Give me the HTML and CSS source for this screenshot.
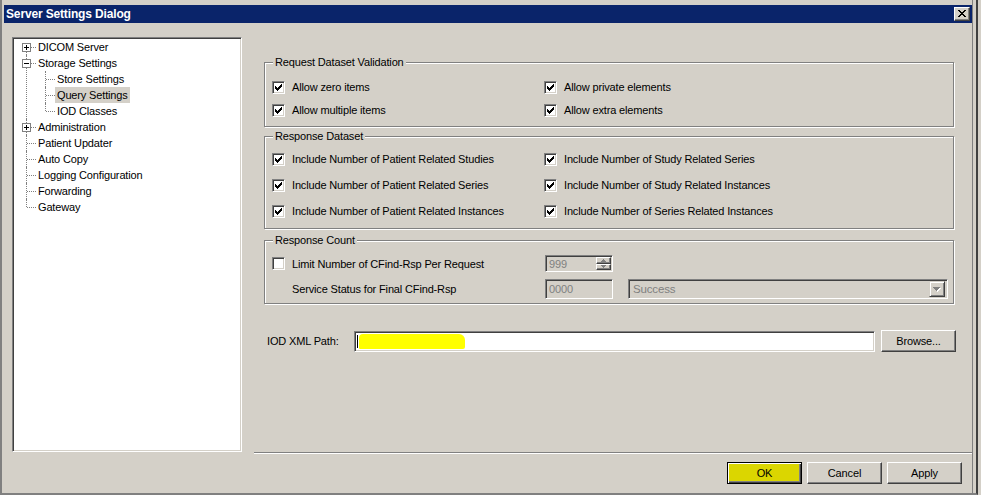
FILE: index.html
```html
<!DOCTYPE html>
<html>
<head>
<meta charset="utf-8">
<title>Server Settings Dialog</title>
<link rel="stylesheet" href="styles.css">
</head>
<body>
<div class="window">
  <div class="titlebar">
    <span class="title">Server Settings Dialog</span>
    <span class="close"><svg width="8" height="7" viewBox="0 0 8 7"><path d="M0 0h2v1H0zM6 0h2v1H6zM1 1h2v1H1zM5 1h2v1H5zM2 2h4v1H2zM3 3h2v1H3zM2 4h4v1H2zM1 5h2v1H1zM5 5h2v1H5zM0 6h2v1H0zM6 6h2v1H6z" fill="#000"/></svg></span>
  </div>
  <div class="main">
    <div class="tree">
      <ul class="roots">
        <li class="top"><span class="exp"><svg width="9" height="9"><rect x=".5" y=".5" width="8" height="8" fill="#fff" stroke="#808080"/><path d="M2 4h5v1H2zM4 2h1v5H4z" fill="#000"/></svg></span><span class="lbl">DICOM Server</span></li>
        <li class="top"><span class="exp"><svg width="9" height="9"><rect x=".5" y=".5" width="8" height="8" fill="#fff" stroke="#808080"/><path d="M2 4h5v1H2z" fill="#000"/></svg></span><span class="lbl">Storage Settings</span>
          <ul class="kids">
            <li class="child"><span class="lbl">Store Settings</span></li>
            <li class="child"><span class="lbl sel">Query Settings</span></li>
            <li class="child"><span class="lbl">IOD Classes</span></li>
          </ul>
        </li>
        <li class="top"><span class="exp"><svg width="9" height="9"><rect x=".5" y=".5" width="8" height="8" fill="#fff" stroke="#808080"/><path d="M2 4h5v1H2zM4 2h1v5H4z" fill="#000"/></svg></span><span class="lbl">Administration</span></li>
        <li class="top"><span class="lbl">Patient Updater</span></li>
        <li class="top"><span class="lbl">Auto Copy</span></li>
        <li class="top"><span class="lbl">Logging Configuration</span></li>
        <li class="top"><span class="lbl">Forwarding</span></li>
        <li class="top"><span class="lbl">Gateway</span></li>
      </ul>
    </div>
    <div class="panel">
      <fieldset class="group">
        <legend>Request Dataset Validation</legend>
        <div class="rows rows-req">
          <label class="check"><span class="box"><svg width="7" height="7"><path d="M0 2h1v3H0zM1 3h1v3H1zM2 4h1v3H2zM3 3h1v3H3zM4 2h1v3H4zM5 1h1v3H5zM6 0h1v3H6z" fill="#000"/></svg></span>Allow zero items</label>
          <label class="check"><span class="box"><svg width="7" height="7"><path d="M0 2h1v3H0zM1 3h1v3H1zM2 4h1v3H2zM3 3h1v3H3zM4 2h1v3H4zM5 1h1v3H5zM6 0h1v3H6z" fill="#000"/></svg></span>Allow private elements</label>
          <label class="check"><span class="box"><svg width="7" height="7"><path d="M0 2h1v3H0zM1 3h1v3H1zM2 4h1v3H2zM3 3h1v3H3zM4 2h1v3H4zM5 1h1v3H5zM6 0h1v3H6z" fill="#000"/></svg></span>Allow multiple items</label>
          <label class="check"><span class="box"><svg width="7" height="7"><path d="M0 2h1v3H0zM1 3h1v3H1zM2 4h1v3H2zM3 3h1v3H3zM4 2h1v3H4zM5 1h1v3H5zM6 0h1v3H6z" fill="#000"/></svg></span>Allow extra elements</label>
        </div>
      </fieldset>
      <fieldset class="group g2">
        <legend>Response Dataset</legend>
        <div class="rows rows-resp">
          <label class="check"><span class="box"><svg width="7" height="7"><path d="M0 2h1v3H0zM1 3h1v3H1zM2 4h1v3H2zM3 3h1v3H3zM4 2h1v3H4zM5 1h1v3H5zM6 0h1v3H6z" fill="#000"/></svg></span>Include Number of Patient Related Studies</label>
          <label class="check"><span class="box"><svg width="7" height="7"><path d="M0 2h1v3H0zM1 3h1v3H1zM2 4h1v3H2zM3 3h1v3H3zM4 2h1v3H4zM5 1h1v3H5zM6 0h1v3H6z" fill="#000"/></svg></span>Include Number of Study Related Series</label>
          <label class="check"><span class="box"><svg width="7" height="7"><path d="M0 2h1v3H0zM1 3h1v3H1zM2 4h1v3H2zM3 3h1v3H3zM4 2h1v3H4zM5 1h1v3H5zM6 0h1v3H6z" fill="#000"/></svg></span>Include Number of Patient Related Series</label>
          <label class="check"><span class="box"><svg width="7" height="7"><path d="M0 2h1v3H0zM1 3h1v3H1zM2 4h1v3H2zM3 3h1v3H3zM4 2h1v3H4zM5 1h1v3H5zM6 0h1v3H6z" fill="#000"/></svg></span>Include Number of Study Related Instances</label>
          <label class="check"><span class="box"><svg width="7" height="7"><path d="M0 2h1v3H0zM1 3h1v3H1zM2 4h1v3H2zM3 3h1v3H3zM4 2h1v3H4zM5 1h1v3H5zM6 0h1v3H6z" fill="#000"/></svg></span>Include Number of Patient Related Instances</label>
          <label class="check"><span class="box"><svg width="7" height="7"><path d="M0 2h1v3H0zM1 3h1v3H1zM2 4h1v3H2zM3 3h1v3H3zM4 2h1v3H4zM5 1h1v3H5zM6 0h1v3H6z" fill="#000"/></svg></span>Include Number of Series Related Instances</label>
        </div>
      </fieldset>
      <fieldset class="group g3">
        <legend>Response Count</legend>
        <div class="rows rows-count">
          <label class="check"><span class="box"></span>Limit Number of CFind-Rsp Per Request</label>
          <div class="spin">
            <span class="spin-val">999</span>
            <span class="spin-btns">
              <span class="sbtn"><svg width="5" height="3"><path d="M2 0h1v1H2zM1 1h3v1H1zM0 2h5v1H0z" fill="#808080"/></svg></span>
              <span class="sbtn"><svg width="5" height="3"><path d="M0 0h5v1H0zM1 1h3v1H1zM2 2h1v1H2z" fill="#808080"/></svg></span>
            </span>
          </div>
          <span class="empty"></span>
          <span class="plain">Service Status for Final CFind-Rsp</span>
          <div class="field dis">0000</div>
          <div class="combo">
            <span class="combo-val">Success</span>
            <span class="drop"><svg width="8" height="5"><path d="M1 1h7v1H1zM2 2h5v1H2zM3 3h3v1H3zM4 4h1v1H4z" fill="#fff"/><path d="M0 0h7v1H0zM1 1h5v1H1zM2 2h3v1H2zM3 3h1v1H3z" fill="#808080"/></svg></span>
          </div>
        </div>
      </fieldset>
      <div class="pathrow">
        <span class="pathlbl">IOD XML Path:</span>
        <div class="field pathfield"><span class="caret"></span><span class="redact"></span></div>
        <button class="btn">Browse...</button>
      </div>
    </div>
  </div>
  <div class="footer">
    <button class="btn default">OK</button>
    <button class="btn">Cancel</button>
    <button class="btn">Apply</button>
  </div>
</div>
</body>
</html>
```
FILE: styles.css
```css
html, body {
  margin: 0;
  padding: 0;
  background: #d4d0c8;
}
body {
  font-family: "Liberation Sans", Arial, sans-serif;
  font-size: 11px;
  letter-spacing: -0.15px;
  color: #000;
}
.window {
  width: 978px;
  height: 495px;
  box-sizing: border-box;
  padding: 5px 4px 0 2px;
  border-left: 2px solid #808080;
  border-right: 2px solid #404040;
  border-bottom: 2px solid #808080;
  box-shadow: inset -3px 0 0 #d4d0c8, inset -4px 0 0 #808080;
  display: flex;
  flex-direction: column;
}
.titlebar {
  height: 18px;
  background: #0a246a;
  display: flex;
  align-items: center;
  justify-content: space-between;
  padding: 0 2px 0 2px;
  flex: none;
}
.title {
  color: #fff;
  font-weight: bold;
  font-size: 12px;
  letter-spacing: -0.15px;
}
.close {
  width: 16px;
  height: 14px;
  box-sizing: border-box;
  background: #d4d0c8;
  border: 1px solid;
  border-color: #fff #404040 #404040 #fff;
  box-shadow: inset -1px -1px 0 #808080;
  display: flex;
  align-items: center;
  justify-content: center;
  padding: 0 1px 1px 0;
}
.close svg { display: block; }

.main {
  height: 430px;
  display: flex;
  flex: none;
}
.tree {
  flex: none;
  width: 230px;
  margin: 14px 0 1px 8px;
  box-sizing: border-box;
  background: #fff;
  border: 1px solid;
  border-color: #808080 #fff #fff #808080;
  box-shadow: inset 1px 1px 0 #404040, inset -1px -1px 0 #d4d0c8;
  padding: 1px;
}
.tree ul {
  list-style: none;
  margin: 0;
  padding: 0;
}
.tree li {
  position: relative;
  line-height: 16px;
}
.tree li.top { padding-left: 24px; }
.tree .kids { margin-left: -24px; }
.tree li.child { padding-left: 43px; }
.tree .lbl {
  display: inline-block;
  height: 16px;
  padding: 0 2px;
  margin-left: -2px;
  position: relative;
  z-index: 1;
}
.tree .lbl.sel { background: #d4d0c8; }
.tree li.top::before {
  content: "";
  position: absolute;
  left: 12px;
  top: 0;
  bottom: 0;
  border-left: 1px dotted #808080;
}
.tree li.top:first-child::before { top: 8px; }
.tree li.top:last-child::before { bottom: auto; height: 8px; }
.tree li.top::after {
  content: "";
  position: absolute;
  left: 13px;
  top: 8px;
  width: 9px;
  border-top: 1px dotted #808080;
}
.tree li.child::before {
  content: "";
  position: absolute;
  left: 31px;
  top: 0;
  bottom: 0;
  border-left: 1px dotted #808080;
}
.tree li.child:last-child::before { bottom: auto; height: 8px; }
.tree li.child::after {
  content: "";
  position: absolute;
  left: 32px;
  top: 8px;
  width: 9px;
  border-top: 1px dotted #808080;
}
.tree .exp {
  position: absolute;
  left: 8px;
  top: 4px;
  width: 9px;
  height: 9px;
  z-index: 2;
}
.tree .exp svg { display: block; }

.panel {
  flex: 1;
  min-width: 0;
  margin-left: 12px;
  padding: 32px 18px 0 10px;
  border-bottom: 1px solid #808080;
  box-shadow: 0 1px 0 #fff;
}
.group {
  width: 690px;
  box-sizing: border-box;
  margin: 0;
  padding: 0 5px 0 7px;
  min-width: 0;
  border: 1px solid #808080;
  box-shadow: inset 1px 1px 0 #fff, 1px 1px 0 #fff;
}
.group legend {
  margin-left: 1px;
  padding: 0 2px;
  line-height: 14px;
  height: 14px;
  background: #d4d0c8;
}
.g2 { margin-top: 2px; }
.g3 { margin-top: 4px; }
.rows {
  display: grid;
  grid-template-columns: 272px 1fr;
}
.rows-req {
  padding: 10px 0 8px;
  grid-auto-rows: 16px;
  row-gap: 7px;
}
.rows-resp {
  padding: 8px 0 9px;
  grid-auto-rows: 16px;
  row-gap: 10px;
}
.rows-count {
  padding: 8px 0 4px;
  grid-template-columns: 258px 68px 1fr;
  grid-template-rows: 17px 20px;
  column-gap: 15px;
  row-gap: 7px;
  align-items: center;
}
.check {
  display: flex;
  align-items: center;
  gap: 7px;
  height: 16px;
  white-space: nowrap;
}
.box {
  width: 13px;
  height: 13px;
  box-sizing: border-box;
  flex: none;
  background: #fff;
  border: 1px solid;
  border-color: #808080 #fff #fff #808080;
  box-shadow: inset 1px 1px 0 #404040, inset -1px -1px 0 #d4d0c8;
  display: flex;
  align-items: center;
  justify-content: center;
}
.box svg { display: block; }
.plain {
  padding-left: 20px;
  white-space: nowrap;
}
.spin, .field, .combo {
  box-sizing: border-box;
  border: 1px solid;
  border-color: #808080 #fff #fff #808080;
  box-shadow: inset 1px 1px 0 #404040, inset -1px -1px 0 #d4d0c8;
}
.spin {
  height: 17px;
  display: flex;
  padding: 1px;
  background: #d4d0c8;
}
.spin-val {
  flex: 1;
  color: #808080;
  line-height: 15px;
  padding-left: 2px;
}
.spin-btns {
  width: 15px;
  display: flex;
  flex-direction: column;
}
.sbtn {
  flex: 1;
  box-sizing: border-box;
  border: 1px solid;
  border-color: #fff #404040 #404040 #fff;
  box-shadow: inset -1px -1px 0 #808080;
  display: flex;
  align-items: center;
  justify-content: center;
}
.sbtn svg { display: block; }
.field.dis {
  height: 20px;
  background: #d4d0c8;
  color: #808080;
  padding: 0 3px;
  line-height: 18px;
}
.combo {
  height: 20px;
  background: #d4d0c8;
  display: flex;
  align-items: center;
  padding: 2px;
}
.combo-val {
  flex: 1;
  color: #808080;
  padding-left: 2px;
  font-size: 11.5px;
}
.drop {
  width: 16px;
  height: 16px;
  box-sizing: border-box;
  border: 1px solid;
  border-color: #d4d0c8 #404040 #404040 #d4d0c8;
  box-shadow: inset 1px 1px 0 #fff, inset -1px -1px 0 #808080;
  display: flex;
  align-items: center;
  justify-content: center;
  padding-top: 1px;
}
.drop svg { display: block; }

.pathrow {
  display: flex;
  align-items: center;
  margin: 26px 0 0 3px;
}
.pathlbl {
  width: 87px;
  flex: none;
}
.pathfield {
  width: 521px;
  height: 21px;
  flex: none;
  background: #fff;
  display: flex;
  align-items: center;
  padding: 0 2px;
  margin-right: 6px;
}
.caret {
  width: 1px;
  height: 13px;
  background: #000;
  margin-right: 1px;
}
.redact {
  width: 106px;
  height: 15px;
  background: #ffff00;
  border-radius: 4px 6px 2px 1px;
}
.btn {
  width: 75px;
  height: 22px;
  box-sizing: border-box;
  flex: none;
  margin: 0;
  padding: 0;
  font: inherit;
  letter-spacing: inherit;
  color: #000;
  background: #d4d0c8;
  border: 1px solid;
  border-color: #fff #404040 #404040 #fff;
  box-shadow: inset -1px -1px 0 #808080;
}
.btn.default {
  border: 1px solid #000;
  background: #dbd600;
  box-shadow: inset 1px 1px 0 #fff, inset -1px -1px 0 #404040, inset -2px -2px 0 #808080;
}
.footer {
  display: flex;
  justify-content: flex-end;
  gap: 5px;
  padding: 9px 10px 0 0;
}
```
